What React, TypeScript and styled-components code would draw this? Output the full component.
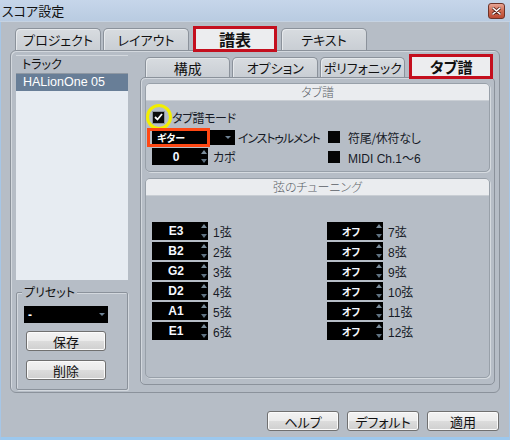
import React from "react";
import styled, { createGlobalStyle } from "styled-components";

const JP = `"Noto Sans CJK JP", "Liberation Sans", sans-serif`;
const LAT = `"Liberation Sans", "Noto Sans CJK JP", sans-serif`;

const Global = createGlobalStyle`
  html, body { margin: 0; padding: 0; }
  body {
    width: 510px; height: 440px; overflow: hidden;
    background: #b6bdc6;
    font-family: ${JP};
    font-size: 12px;
    color: #111;
    font-feature-settings: "palt" 1;
  }
`;

const Window = styled.div`
  width: 510px; height: 440px; box-sizing: border-box;
  display: flex; flex-direction: column;
  background: #b6bdc6;
  box-shadow: inset 1px 0 #a6c6e6, inset -1px 0 #a6c6e6, inset 0 -3px #9cc8ee;
`;

const TitleBar = styled.div`
  height: 22px; flex: none; box-sizing: border-box;
  display: flex; align-items: center; justify-content: space-between;
  padding: 0 5px 0 2px;
  background: linear-gradient(#c6d6ea, #b9cbe1);
  border-bottom: 1px solid #c6d3e2;
  font-size: 13px; color: #111;
`;

const CloseBtn = styled.div`
  width: 17px; height: 16px; box-sizing: border-box;
  border: 1px solid #6e3328; border-radius: 3px;
  background: linear-gradient(#e8a595, #cf6a52 50%, #bb4a33);
  display: flex; align-items: center; justify-content: center;
`;

const Body = styled.div`
  flex: 1; display: flex; flex-direction: column;
  padding: 4px 10px 0 10px;
`;

const TabRow = styled.div`
  height: 24px; display: flex; align-items: flex-end;
  padding-left: ${(p: { $pl: number }) => p.$pl}px;
  gap: 2px; flex: none;
`;

const Tab = styled.div<{ $w: number; $h: number; $size: number }>`
  width: ${(p) => p.$w}px; height: ${(p) => p.$h}px; box-sizing: border-box;
  border: 1px solid #8b929b; border-bottom: none;
  border-radius: 5px 5px 0 0;
  background: linear-gradient(#d8dce0, #c9ced4);
  box-shadow: inset 1px 1px 0 #e6e9ec;
  display: flex; align-items: center; justify-content: center;
  font-size: ${(p) => p.$size}px; color: #111;
`;

const SelTab = styled.div<{ $w: number; $h: number; $size: number }>`
  width: ${(p) => p.$w}px; height: ${(p) => p.$h}px; box-sizing: border-box;
  border: 3px solid #c40f1e;
  background: #ecedef;
  display: flex; align-items: center; justify-content: center;
  font-size: ${(p) => p.$size}px; font-weight: bold; color: #111;
  margin: 0 2px -2px 2px; position: relative; z-index: 1;
`;

const OuterPanel = styled.div`
  height: 343px; box-sizing: border-box; flex: none;
  border: 1px solid #8b929b; border-radius: 6px;
  box-shadow: inset 1px 1px 0 #d3d8de;
  display: flex; padding: 4px 4px 0 5px;
`;

const LeftCol = styled.div`
  width: 112px; display: flex; flex-direction: column;
`;

const TrackHeader = styled.div`
  height: 16px; line-height: 16px; padding-left: 6px;
  border-top: 1px solid #d3d8de;
  font-size: 12px;
`;

const TrackList = styled.div`
  height: 206px; margin-top: 1px;
  background: #e7ecf2;
  border-top: 1px solid #8f98a3;
`;

const TrackItem = styled.div`
  height: 17px; line-height: 17px; padding-left: 7px;
  background: #687e97; color: #fff;
  font-family: ${LAT}; font-size: 12.5px;
`;

const GroupBox = styled.div`
  margin-top: 12px; height: 98px; box-sizing: border-box;
  border: 1px solid #8b929b; border-radius: 2px;
  box-shadow: 1px 1px 0 #d3d8de, inset 1px 1px 0 #d3d8de;
  display: flex; flex-direction: column; padding-left: 7px;
`;

const GroupLabel = styled.div`
  align-self: flex-start; margin: -8px 0 0 -2px; padding: 0 2px;
  height: 14px; line-height: 14px;
  background: #b6bdc6; font-size: 12px;
`;

const PresetSelect = styled.div`
  width: 84px; height: 17px; margin-top: 7px;
  background: #000; color: #fff; box-sizing: border-box;
  display: flex; align-items: center; justify-content: space-between;
  padding: 0 3px 0 4px; font-family: ${LAT}; font-weight: bold; font-size: 12px;
`;

const SmallArrow = styled.span`
  width: 0; height: 0;
  border-left: 3px solid transparent; border-right: 3px solid transparent;
  border-top: 3px solid #6e8294;
`;

const Button = styled.div<{ $w: number; $mt?: number }>`
  width: ${(p) => p.$w}px; height: 20px; box-sizing: border-box;
  margin-top: ${(p) => p.$mt ?? 0}px;
  border: 1px solid #707070; border-radius: 3px;
  background: linear-gradient(#f3f3f3 0%, #ebebeb 48%, #dcdcdc 52%, #cfcfcf 100%);
  box-shadow: inset 0 0 0 1px #fbfbfb;
  display: flex; align-items: center; justify-content: center;
  font-size: 13px; color: #111;
`;

const PresetButton = styled(Button)`
  margin-left: 2px;
`;

const RightCol = styled.div`
  width: 355px; margin-left: 12px; margin-top: -2px;
  display: flex; flex-direction: column;
`;

const InnerPanel = styled.div`
  height: 308px; box-sizing: border-box; flex: none;
  border: 1px solid #8b929b; border-radius: 5px;
  box-shadow: inset 1px 1px 0 #d3d8de;
  padding: 5px 4px 0 4px;
  display: flex; flex-direction: column; gap: 6px;
`;

const Section = styled.div<{ $h: number }>`
  height: ${(p) => p.$h}px; box-sizing: border-box;
  border: 1px solid #98a0a9; border-radius: 5px;
  box-shadow: 1px 1px 0 #d6dbe0;
  display: flex; flex-direction: column; overflow: hidden;
`;

const SectionHead = styled.div`
  height: 16px; line-height: 16px; flex: none;
  background: #eaecef; border-bottom: 1px solid #c9ced4;
  text-align: center; color: #5a5f66; font-size: 12px; font-weight: 300;
`;

const TabBody = styled.div`
  display: flex; padding: 9px 0 0 6px;
`;

const TuningBody = styled.div`
  display: flex; padding: 26px 0 0 6px;
`;

const Column = styled.div<{ $w?: number; $pt?: number; $gap?: number }>`
  ${(p) => (p.$w ? `width: ${p.$w}px;` : "")}
  padding-top: ${(p) => p.$pt ?? 0}px;
  display: flex; flex-direction: column; gap: ${(p) => p.$gap ?? 0}px;
`;

const Row = styled.div<{ $h: number; $mt?: number }>`
  height: ${(p) => p.$h}px; margin-top: ${(p) => p.$mt ?? 0}px;
  display: flex; align-items: center;
`;

const CheckWrap = styled.div`
  position: relative; width: 13px; height: 13px;
`;

const CheckBox = styled.div`
  width: 13px; height: 13px; box-sizing: border-box;
  border: 1px solid #8e959e; background: #0c0c0c;
  display: flex; align-items: center; justify-content: center;
`;

const YellowRing = styled.div`
  position: absolute; left: -6px; top: -7px; width: 26px; height: 26px;
  box-sizing: border-box; border: 3px solid #f2ef00; border-radius: 50%;
  pointer-events: none;
`;

const Label = styled.span<{ $ml: number; $ls?: number }>`
  margin-left: ${(p) => p.$ml}px; font-size: 12px; color: #161b26; white-space: nowrap;
  letter-spacing: ${(p) => p.$ls ?? 0}px;
`;

const BlackBox = styled.div`
  width: 12px; height: 12px; background: #050505;
`;

const DropWrap = styled.div`
  position: relative; width: 83px; height: 15px;
  background: #000; color: #fff;
  display: flex; align-items: center; justify-content: space-between;
  padding: 0 4px 0 5px; box-sizing: border-box;
  font-weight: bold; font-size: 10px;
`;

const OrangeBox = styled.div`
  position: absolute; left: -5px; top: -2px; width: 63px; height: 19px;
  box-sizing: border-box; border: 3px solid #ff4814;
  pointer-events: none;
`;

const SpinBox = styled.div<{ $h: number }>`
  width: 56px; height: ${(p) => p.$h}px; background: #000;
  display: flex; flex: none;
`;

const SpinValue = styled.div<{ $jp?: boolean }>`
  width: 48px; display: flex; align-items: center; justify-content: center;
  color: #f4f8ff; font-weight: bold;
  font-family: ${(p) => (p.$jp ? JP : LAT)};
  font-size: ${(p) => (p.$jp ? 10 : 12)}px;
`;

const SpinArrows = styled.div`
  width: 8px; display: flex; flex-direction: column; justify-content: space-between;
  align-items: center; padding: 2px 0;
`;

const UpTri = styled.span`
  width: 0; height: 0;
  border-left: 3px solid transparent; border-right: 3px solid transparent;
  border-bottom: 4px solid #7a8c9b;
`;
const DownTri = styled.span`
  width: 0; height: 0;
  border-left: 3px solid transparent; border-right: 3px solid transparent;
  border-top: 4px solid #5f7282;
`;

const Digits = styled.span`
  font-family: ${LAT};
`;

const BottomRow = styled.div`
  display: flex; justify-content: flex-end; gap: 8px;
  margin-top: 18px; padding-right: 1px;
`;

function Spinner({ value, h = 18, jp = false }: { value: string; h?: number; jp?: boolean }) {
  return (
    <SpinBox $h={h}>
      <SpinValue $jp={jp}>{value}</SpinValue>
      <SpinArrows>
        <UpTri />
        <DownTri />
      </SpinArrows>
    </SpinBox>
  );
}

const leftStrings = ["E3", "B2", "G2", "D2", "A1", "E1"];

export default function App() {
  return (
    <>
      <Global />
      <Window>
        <TitleBar>
          <span>スコア設定</span>
          <CloseBtn>
            <svg width="9" height="8" viewBox="0 0 9 8">
              <path d="M1 1 L8 7 M8 1 L1 7" stroke="#5a2218" strokeWidth="3" strokeLinecap="round" />
              <path d="M1 1 L8 7 M8 1 L1 7" stroke="#fff" strokeWidth="1.6" strokeLinecap="round" />
            </svg>
          </CloseBtn>
        </TitleBar>
        <Body>
          <TabRow $pl={5}>
            <Tab $w={86} $h={22} $size={13}>プロジェクト</Tab>
            <Tab $w={86} $h={22} $size={13}>レイアウト</Tab>
            <SelTab $w={84} $h={26} $size={16}>譜表</SelTab>
            <Tab $w={86} $h={22} $size={13}>テキスト</Tab>
          </TabRow>
          <OuterPanel>
            <LeftCol>
              <TrackHeader>トラック</TrackHeader>
              <TrackList>
                <TrackItem>HALionOne 05</TrackItem>
              </TrackList>
              <GroupBox>
                <GroupLabel>プリセット</GroupLabel>
                <PresetSelect>
                  <span>-</span>
                  <SmallArrow />
                </PresetSelect>
                <PresetButton $w={80} $mt={8}>保存</PresetButton>
                <PresetButton $w={80} $mt={9}>削除</PresetButton>
              </GroupBox>
            </LeftCol>
            <RightCol>
              <TabRow $pl={5}>
                <Tab $w={86} $h={20} $size={14}>構成</Tab>
                <Tab $w={86} $h={20} $size={13}>オプション</Tab>
                <Tab $w={86} $h={20} $size={13}>ポリフォニック</Tab>
                <SelTab $w={84} $h={25} $size={15}>タブ譜</SelTab>
              </TabRow>
              <InnerPanel>
                <Section $h={89}>
                  <SectionHead>タブ譜</SectionHead>
                  <TabBody>
                    <Column $w={176}>
                      <Row $h={14}>
                        <CheckWrap>
                          <CheckBox>
                            <svg width="9" height="8" viewBox="0 0 9 8">
                              <path d="M1 4 L3.5 6.5 L8 1" stroke="#fff" strokeWidth="1.8" fill="none" />
                            </svg>
                          </CheckBox>
                          <YellowRing />
                        </CheckWrap>
                        <Label $ml={7} $ls={-0.3}>タブ譜モード</Label>
                      </Row>
                      <Row $h={19} $mt={4}>
                        <DropWrap>
                          <span>ギター</span>
                          <SmallArrow />
                          <OrangeBox />
                        </DropWrap>
                        <Label $ml={3} $ls={-1.2}>インストゥルメント</Label>
                      </Row>
                      <Row $h={17} $mt={1}>
                        <Spinner value="0" h={17} />
                        <Label $ml={5}>カポ</Label>
                      </Row>
                    </Column>
                    <Column $pt={21} $gap={8}>
                      <Row $h={12}>
                        <BlackBox />
                        <Label $ml={8} $ls={-0.3}>符尾/休符なし</Label>
                      </Row>
                      <Row $h={12}>
                        <BlackBox />
                        <Label $ml={8}><Digits>MIDI Ch.1</Digits>〜<Digits>6</Digits></Label>
                      </Row>
                    </Column>
                  </TabBody>
                </Section>
                <Section $h={200}>
                  <SectionHead>弦のチューニング</SectionHead>
                  <TuningBody>
                    <Column $w={175} $gap={2}>
                      {leftStrings.map((s, i) => (
                        <Row $h={18} key={s}>
                          <Spinner value={s} />
                          <Label $ml={5}><Digits>{i + 1}</Digits>弦</Label>
                        </Row>
                      ))}
                    </Column>
                    <Column $gap={2}>
                      {[7, 8, 9, 10, 11, 12].map((n) => (
                        <Row $h={18} key={n}>
                          <Spinner value="オフ" jp />
                          <Label $ml={5}><Digits>{n}</Digits>弦</Label>
                        </Row>
                      ))}
                    </Column>
                  </TuningBody>
                </Section>
              </InnerPanel>
            </RightCol>
          </OuterPanel>
          <BottomRow>
            <Button $w={72}>ヘルプ</Button>
            <Button $w={72}>デフォルト</Button>
            <Button $w={72}>適用</Button>
          </BottomRow>
        </Body>
      </Window>
    </>
  );
}
